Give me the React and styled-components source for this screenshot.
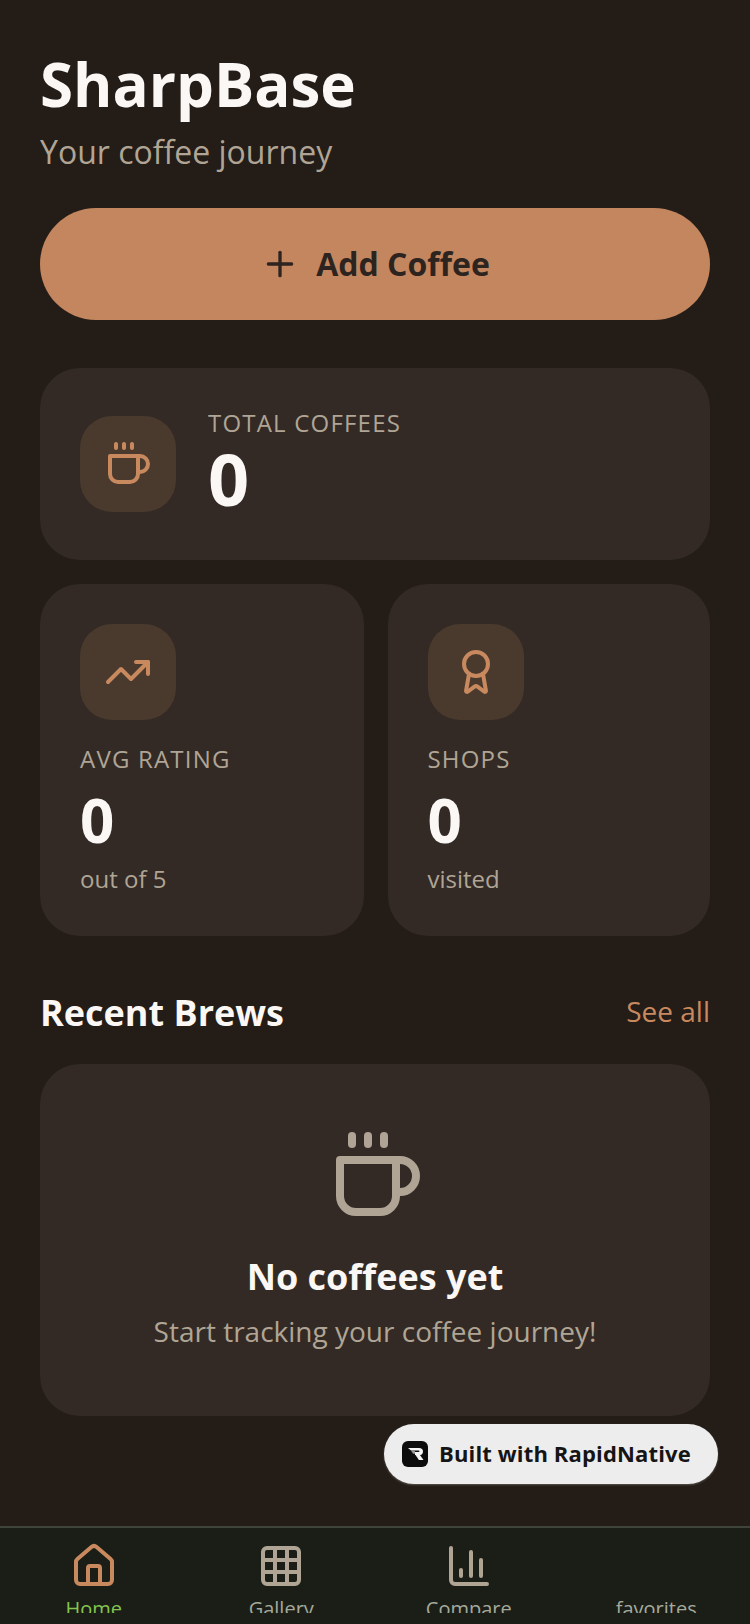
import React from "react";
import styled, { createGlobalStyle } from "styled-components";
import { Plus, TrendingUp, Award, House, Grid3x3, ChartColumn } from "lucide-react";

const GlobalStyle = createGlobalStyle`
  html, body {
    margin: 0;
    padding: 0;
    background: #231c17;
  }
  * {
    box-sizing: border-box;
  }
`;

const Page = styled.div`
  position: relative;
  width: 750px;
  height: 1624px;
  display: flex;
  flex-flow: column;
  overflow: hidden;
  background: #231c17;
  font-family: "Open Sans", "Noto Sans", sans-serif;
`;

const Content = styled.main`
  flex: 1;
  min-height: 0;
  padding: 48px 40px 0;
  overflow: hidden;
`;

const Title = styled.h1`
  margin: 0;
  font-size: 60px;
  line-height: 72px;
  font-weight: 700;
  color: #faf7f5;
`;

const Subtitle = styled.p`
  margin: 8px 0 0;
  font-size: 32px;
  line-height: 48px;
  color: #b0a595;
`;

const AddButton = styled.button`
  width: 100%;
  height: 112px;
  margin-top: 32px;
  display: flex;
  align-items: center;
  justify-content: center;
  gap: 16px;
  border: none;
  border-radius: 56px;
  background: #c4865f;
  color: #2d2420;
  font-family: inherit;
  font-size: 32px;
  font-weight: 700;
`;

const AddText = styled.span`
  margin-top: -2px;
`;

const Card = styled.section`
  background: #332a25;
  border-radius: 40px;
  padding: 40px;
`;

const TotalCard = styled(Card)`
  height: 192px;
  margin-top: 48px;
  display: flex;
  align-items: center;
  gap: 32px;
`;

const TotalText = styled.div`
  padding-bottom: 6px;
`;

const StatRow = styled.div`
  display: grid;
  grid-template-columns: 323.5px 322.5px;
  gap: 24px;
  margin-top: 24px;
`;

const StatCard = styled(Card)`
  height: 352px;
`;

const IconBox = styled.div`
  width: 96px;
  height: 96px;
  flex: none;
  display: flex;
  align-items: center;
  justify-content: center;
  border-radius: 32px;
  background: #4a3a2e;
  color: #c8895f;
`;

const Label = styled.div`
  font-size: 24px;
  line-height: 32px;
  letter-spacing: 1.2px;
  color: #b0a595;
  margin-top: ${(p) => (p.$top ? "23px" : "-1px")};
`;

const BigValue = styled.div`
  margin-top: 3px;
  font-size: 72px;
  line-height: 72px;
  font-weight: 700;
  color: #faf7f5;
`;

const Value = styled.div`
  margin-top: 9px;
  font-size: 60px;
  line-height: 72px;
  font-weight: 700;
  color: #faf7f5;
`;

const Hint = styled.div`
  margin-top: 7px;
  font-size: 24px;
  line-height: 32px;
  color: #b0a595;
`;

const SectionHead = styled.div`
  display: flex;
  align-items: center;
  justify-content: space-between;
  margin-top: 48px;
  height: 56px;
`;

const SectionTitle = styled.h2`
  margin: 0;
  font-size: 36px;
  font-weight: 700;
  color: #faf7f5;
`;

const SeeAll = styled.a`
  margin-top: -2px;
  font-size: 28px;
  color: #c8895f;
`;

const EmptyCard = styled(Card)`
  height: 352px;
  margin-top: 24px;
  display: flex;
  flex-flow: column;
  align-items: center;
  padding-top: 64px;
  color: #b0a595;
`;

const EmptyIcon = styled.div`
  height: 96px;
  margin-left: 2px;
`;

const EmptyTitle = styled.h3`
  margin: 29px 0 0;
  font-size: 36px;
  line-height: 48px;
  font-weight: 700;
  color: #faf7f5;
`;

const EmptyText = styled.p`
  margin: 10px 0 0;
  font-size: 28px;
  line-height: 40px;
  color: #b0a595;
`;

const Badge = styled.div`
  position: absolute;
  left: 384px;
  top: 1424px;
  width: 334px;
  height: 60px;
  display: flex;
  align-items: center;
  gap: 11px;
  padding: 0 0 2px 18px;
  border-radius: 30px;
  background: #eeeded;
  box-shadow: 0 1px 2px rgba(255, 255, 255, 0.25);
  color: #151515;
  font-size: 22px;
  font-weight: 700;
  letter-spacing: 0.15px;
`;

const BadgeLogo = styled.svg`
  width: 26px;
  height: 26px;
  flex: none;
  margin-top: 2px;
`;

const TabBar = styled.nav`
  height: 98px;
  flex: none;
  display: grid;
  grid-template-columns: repeat(4, 1fr);
  border-top: 2px solid #3e443a;
  background: #1a1e16;
  overflow: hidden;
`;

const Tab = styled.div`
  height: 85px;
  padding-top: 14px;
  display: flex;
  flex-flow: column;
  align-items: center;
  overflow: hidden;
  color: ${(p) => (p.$active ? "#c8895f" : "#b0a595")};
`;

const TabIcon = styled.div`
  width: 48px;
  height: 48px;
  flex: none;
`;

const TabLabel = styled.span`
  margin-top: 3px;
  font-size: 20px;
  line-height: 32px;
  color: ${(p) => (p.$active ? "#84c44e" : "#a5a99c")};
`;

// lucide's current Coffee rounds the cup's top corners, the picture doesn't
const CoffeeIcon = ({ size }) => (
  <svg width={size} height={size} viewBox="0 0 24 24" fill="none" stroke="currentColor" strokeWidth="2" strokeLinecap="round" strokeLinejoin="round">
    <path d="M17 8h1a4 4 0 1 1 0 8h-1" />
    <path d="M3 8h14v9a4 4 0 0 1-4 4H7a4 4 0 0 1-4-4Z" />
    <path d="M6 2v2" />
    <path d="M10 2v2" />
    <path d="M14 2v2" />
  </svg>
);

const tabs = [
  { label: "Home", icon: House, active: true },
  { label: "Gallery", icon: Grid3x3 },
  { label: "Compare", icon: ChartColumn },
  { label: "favorites" },
];

export default function App() {
  return (
    <Page>
      <GlobalStyle />
      <Content>
        <Title>SharpBase</Title>
        <Subtitle>Your coffee journey</Subtitle>
        <AddButton>
          <Plus size={40} strokeWidth={2} />
          <AddText>Add Coffee</AddText>
        </AddButton>

        <TotalCard>
          <IconBox><CoffeeIcon size={48} /></IconBox>
          <TotalText>
            <Label>TOTAL COFFEES</Label>
            <BigValue>0</BigValue>
          </TotalText>
        </TotalCard>

        <StatRow>
          <StatCard>
            <IconBox><TrendingUp size={48} /></IconBox>
            <Label $top>AVG RATING</Label>
            <Value>0</Value>
            <Hint>out of 5</Hint>
          </StatCard>
          <StatCard>
            <IconBox><Award size={48} /></IconBox>
            <Label $top>SHOPS</Label>
            <Value>0</Value>
            <Hint>visited</Hint>
          </StatCard>
        </StatRow>

        <SectionHead>
          <SectionTitle>Recent Brews</SectionTitle>
          <SeeAll>See all</SeeAll>
        </SectionHead>

        <EmptyCard>
          <EmptyIcon><CoffeeIcon size={96} /></EmptyIcon>
          <EmptyTitle>No coffees yet</EmptyTitle>
          <EmptyText>Start tracking your coffee journey!</EmptyText>
        </EmptyCard>
      </Content>

      <Badge>
        <BadgeLogo viewBox="0 0 26 26">
          <rect width="26" height="26" rx="6" fill="#0c0c0c" />
          <path d="M6 7h11q4 0 4 3.500 0 3-3 3.600l3.500 5h-4.600l-3.400-5H13v-3h3.500q1 0 1-.8t-1-.8H9z" fill="#f4f4f4" />
          <path d="M9 9.500h4v3.300h-2z" fill="#9a9a9a" />
        </BadgeLogo>
        Built with RapidNative
      </Badge>

      <TabBar>
        {tabs.map((t) => (
          <Tab key={t.label} $active={t.active}>
            <TabIcon>{t.icon ? <t.icon size={48} /> : null}</TabIcon>
            <TabLabel $active={t.active}>{t.label}</TabLabel>
          </Tab>
        ))}
      </TabBar>
    </Page>
  );
}
